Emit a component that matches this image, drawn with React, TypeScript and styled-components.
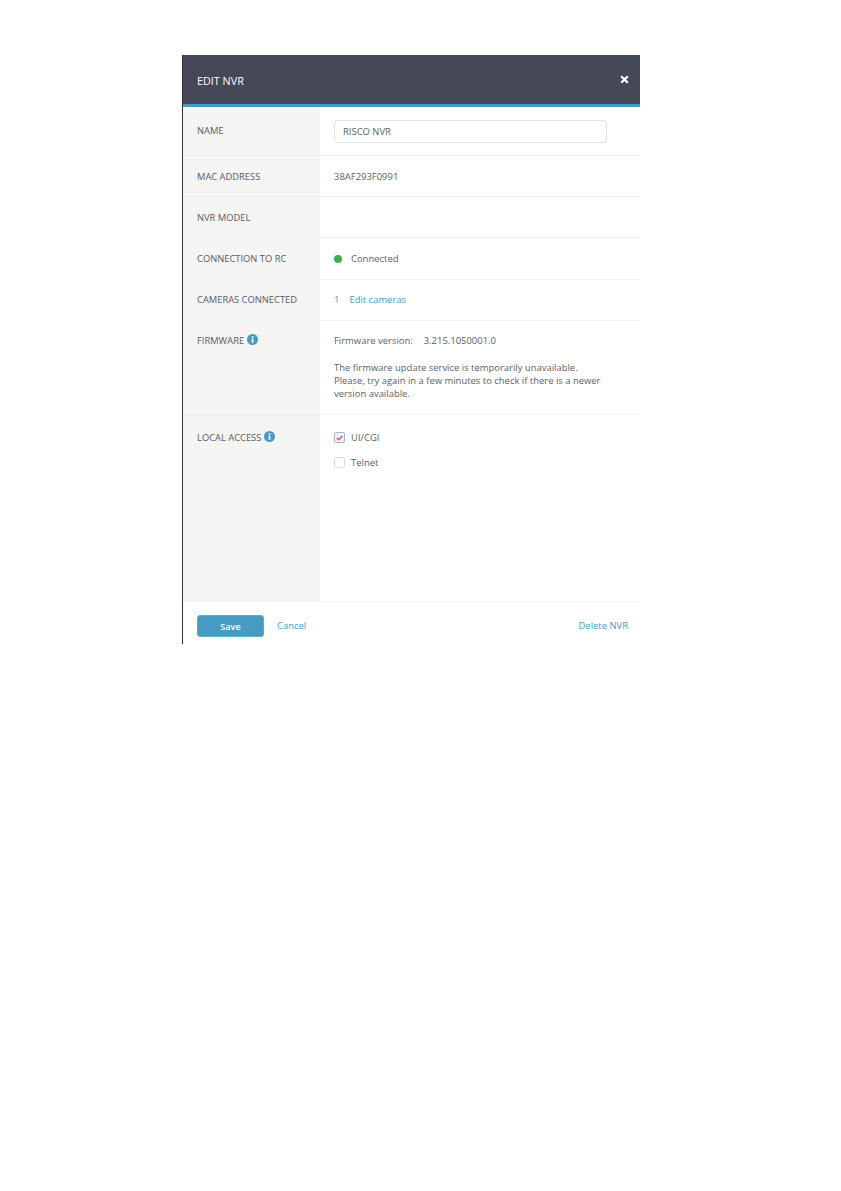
import React from "react";
import styled, { createGlobalStyle } from "styled-components";

const Global = createGlobalStyle`
  html, body { margin: 0; padding: 0; background: #fff; }
  body { font-family: "Open Sans", "Liberation Sans", sans-serif; color: #5c5f66; }
`;

const Page = styled.div`
  padding: 55px 0 0 182px;
  width: 458px;
`;

const Panel = styled.div`
  width: 457px;
  height: 589px;
  border-left: 1px solid #333;
  display: flex;
  flex-direction: column;
`;

const Header = styled.header`
  height: 52px;
  box-sizing: border-box;
  flex: none;
  background: #454856;
  border-bottom: 3px solid #459bc1;
  display: flex;
  align-items: center;
  justify-content: space-between;
  padding: 0 11px 0 14px;
  color: #fff;
`;

const Title = styled.h1`
  margin: 0;
  font-size: 10.8px;
  font-weight: 400;
  line-height: 14px;
  padding-top: 2px;
`;

const Close = styled.svg`
  width: 9px;
  height: 9px;
`;

const Row = styled.div<{ $h: number; $grow?: boolean }>`
  height: ${(p) => p.$h}px;
  flex: ${(p) => (p.$grow ? "1 1 auto" : "none")};
  display: flex;
  box-sizing: border-box;
  border-bottom: 1px solid #f1f1f0;
`;

const Label = styled.div<{ $top: number }>`
  width: 137px;
  flex: none;
  background: #f5f5f3;
  padding: ${(p) => p.$top}px 0 0 14px;
  box-sizing: border-box;
  font-size: 9.35px;
  line-height: 13px;
  color: #5a5c62;
  display: flex;
  align-items: flex-start;
  gap: 3px;
  white-space: nowrap;
`;

const Value = styled.div<{ $top: number }>`
  flex: 1;
  padding: ${(p) => p.$top}px 0 0 14px;
  font-size: 9.45px;
  line-height: 13px;
  color: #5c5f66;
  min-width: 0;
`;

const Input = styled.div`
  width: 273px;
  height: 23px;
  box-sizing: border-box;
  border: 1px solid #e3e3e3;
  border-radius: 3px;
  padding: 0 8px;
  font-size: 9.45px;
  line-height: 21px;
  color: #5c5f66;
`;

const Status = styled.div`
  display: flex;
  align-items: center;
  gap: 9px;
`;

const Dot = styled.span`
  width: 8px;
  height: 8px;
  border-radius: 50%;
  background: #3fae56;
`;

const Cameras = styled.div`
  display: flex;
  gap: 10px;
`;

const CameraCount = styled.span`
  color: #4a9bc4;
`;

const LinkText = styled.a`
  color: #4a9bc4;
  text-decoration: none;
  font-size: 9.45px;
`;

const Version = styled.div`
  display: flex;
  gap: 11px;
  margin-bottom: 14px;
`;

const Notice = styled.p`
  margin: 0;
  width: 285px;
`;

const Check = styled.label`
  display: flex;
  align-items: center;
  gap: 6px;
  height: 13px;
  margin-bottom: 12px;
`;

const Box = styled.span<{ $on?: boolean }>`
  width: 11px;
  height: 11px;
  box-sizing: border-box;
  border: 1px solid ${(p) => (p.$on ? "#a6b4dc" : "#dcdcdc")};
  border-radius: 2px;
  background: ${(p) => (p.$on ? "#f2f3f8" : "#fff")};
  display: flex;
  align-items: center;
  justify-content: center;
`;

const Footer = styled.footer`
  flex: none;
  height: 42px;
  display: flex;
  align-items: flex-start;
  padding: 13px 12px 0 14px;
  box-sizing: border-box;
`;

const Save = styled.button`
  width: 67px;
  height: 22px;
  background: #459bc1;
  border: 1px solid #63abc9;
  border-radius: 3px;
  color: #fff;
  font-family: inherit;
  font-size: 9.2px;
  font-weight: 600;
  padding: 0;
  margin-right: 13px;
`;

const FooterLink = styled(LinkText)`
  line-height: 21px;
`;

const Spacer = styled.div`
  flex: 1;
`;

const Info = () => (
  <svg width="11" height="11" viewBox="0 0 11 11">
    <circle cx="5.5" cy="5.5" r="5.5" fill="#459bc1" />
    <rect x="4.7" y="2" width="1.7" height="1.6" fill="#fff" />
    <rect x="4.7" y="4.5" width="1.7" height="4.3" fill="#fff" />
  </svg>
);

export default function App() {
  return (
    <>
      <Global />
      <Page>
        <Panel>
          <Header>
            <Title>EDIT NVR</Title>
            <Close viewBox="0 0 9 9">
              <path d="M1.2 1.2 7.8 7.8M7.8 1.2 1.2 7.8" stroke="#fff" strokeWidth="2.2" />
            </Close>
          </Header>
          <Row $h={49}>
            <Label $top={17}>NAME</Label>
            <Value $top={13}>
              <Input>RISCO NVR</Input>
            </Value>
          </Row>
          <Row $h={41}>
            <Label $top={14}>MAC ADDRESS</Label>
            <Value $top={14}>38AF293F0991</Value>
          </Row>
          <Row $h={41}>
            <Label $top={14}>NVR MODEL</Label>
            <Value $top={14} />
          </Row>
          <Row $h={42}>
            <Label $top={14}>CONNECTION TO RC</Label>
            <Value $top={14}>
              <Status>
                <Dot />
                Connected
              </Status>
            </Value>
          </Row>
          <Row $h={41}>
            <Label $top={13}>CAMERAS CONNECTED</Label>
            <Value $top={13}>
              <Cameras>
                <CameraCount>1</CameraCount>
                <LinkText>Edit cameras</LinkText>
              </Cameras>
            </Value>
          </Row>
          <Row $h={94}>
            <Label $top={13}>
              FIRMWARE <Info />
            </Label>
            <Value $top={13}>
              <Version>
                <span>Firmware version:</span>
                <span>3.215.1050001.0</span>
              </Version>
              <Notice>
                The firmware update service is temporarily unavailable.
                <br />
                Please, try again in a few minutes to check if there is a newer
                <br />
                version available.
              </Notice>
            </Value>
          </Row>
          <Row $h={187} $grow>
            <Label $top={16}>
              LOCAL ACCESS <Info />
            </Label>
            <Value $top={16}>
              <Check>
                <Box $on>
                  <svg width="7" height="6" viewBox="0 0 7 6">
                    <path d="M.8 3 2.7 4.8 6.3 1" fill="none" stroke="#e0454f" strokeWidth="1.3" />
                  </svg>
                </Box>
                UI/CGI
              </Check>
              <Check>
                <Box />
                Telnet
              </Check>
            </Value>
          </Row>
          <Footer>
            <Save>Save</Save>
            <FooterLink>Cancel</FooterLink>
            <Spacer />
            <FooterLink>Delete NVR</FooterLink>
          </Footer>
        </Panel>
      </Page>
    </>
  );
}
